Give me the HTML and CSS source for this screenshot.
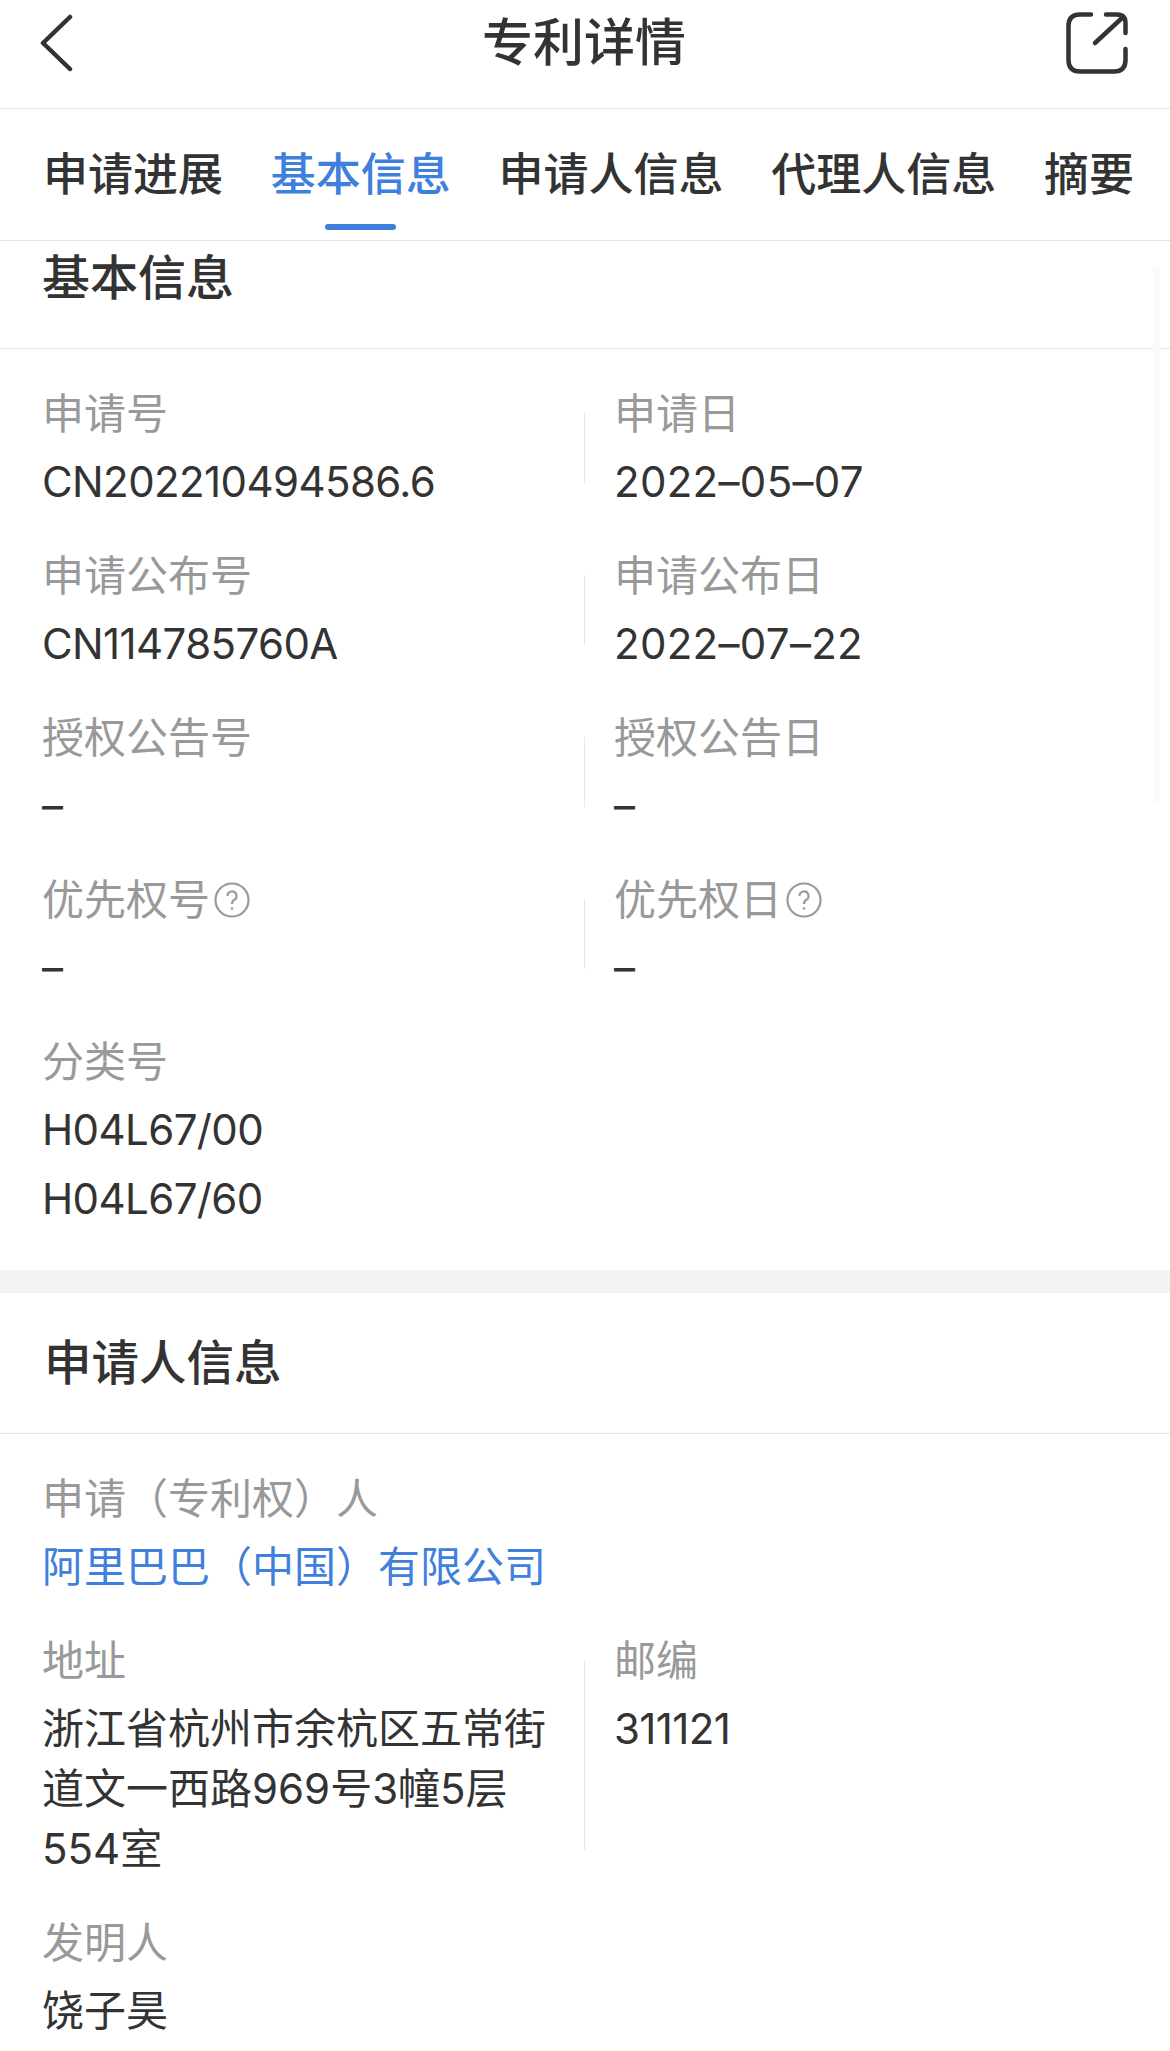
FILE: index.html
```html
<!doctype html>
<html lang="zh">
<head>
	<meta charset="utf-8" />
	<title>专利详情</title>
	<link rel="stylesheet" href="styles.css">
</head>
<body>
	<header class="navbar">
		<svg class="nav-back" width="36" height="58" viewBox="0 0 36 58"><path d="M30 3 L3 29 L30 55" /></svg>
		<h1>专利详情</h1>
		<svg class="nav-share" width="62" height="62" viewBox="0 0 62 62"><path d="M25 2.5 H14 Q2.5 2.5 2.5 14 V48 Q2.5 59.5 14 59.5 H48 Q59.5 59.5 59.5 48 V37 M40 2.5 H51 Q59.5 2.5 59.5 11 V21 M56 6 L29 31" /></svg>
	</header>

	<nav class="tabs">
		<a>申请进展</a>
		<a class="active">基本信息</a>
		<a>申请人信息</a>
		<a>代理人信息</a>
		<a>摘要</a>
	</nav>

	<main>
		<section>
			<h2 class="clipped">基本信息</h2>
			<div class="fields">
				<div class="field left"><label>申请号</label><p class="num">CN202210494586.6</p></div>
				<div class="field"><label>申请日</label><p class="date">2022–05–07</p></div>
				<div class="field left"><label>申请公布号</label><p class="num">CN114785760A</p></div>
				<div class="field"><label>申请公布日</label><p class="date">2022–07–22</p></div>
				<div class="field left"><label>授权公告号</label><p class="num">–</p></div>
				<div class="field"><label>授权公告日</label><p class="num">–</p></div>
				<div class="field left"><label>优先权号<svg class="help" width="36" height="36" viewBox="0 0 36 36"><circle cx="18" cy="18" r="16.5" /><path d="M13.5 14 A4.5 4.5 0 1 1 20 18 Q18 19 18 22" /><circle class="dot" cx="18" cy="26.5" r="1.3" /></svg></label><p class="num">–</p></div>
				<div class="field"><label>优先权日<svg class="help" width="36" height="36" viewBox="0 0 36 36"><circle cx="18" cy="18" r="16.5" /><path d="M13.5 14 A4.5 4.5 0 1 1 20 18 Q18 19 18 22" /><circle class="dot" cx="18" cy="26.5" r="1.3" /></svg></label><p class="num">–</p></div>
				<div class="field wide"><label>分类号</label><p class="num">H04L67/00</p><p class="num">H04L67/60</p></div>
			</div>
		</section>

		<section>
			<h2>申请人信息</h2>
			<div class="fields">
				<div class="field wide"><label>申请（专利权）人</label><p class="link">阿里巴巴（中国）有限公司</p></div>
				<div class="field left"><label>地址</label><p>浙江省杭州市余杭区五常街道文一西路969号3幢5层554室</p></div>
				<div class="field"><label>邮编</label><p class="num">311121</p></div>
				<div class="field wide"><label>发明人</label><p>饶子昊</p></div>
			</div>
		</section>
	</main>

	<div class="scrollbar"></div>
</body>
</html>
```

FILE: styles.css
```css
html, body {
	width: 100%;
	height: 100%;
	margin: 0;
	background: #fff;
	color: #333;
	font-family: "Inter", "Noto Sans CJK SC", sans-serif;
	overflow: hidden;
}

.navbar {
	height: 109px;
	box-sizing: border-box;
	display: grid;
	grid-template-columns: 1fr auto 1fr;
	align-items: center;
	padding: 0 42px 22px 40px;
	border-bottom: 1px solid #e3e3e3;
}

.navbar h1 {
	margin: 0;
	font-size: 51px;
	font-weight: 500;
	line-height: 60px;
	color: #333;
}

.nav-share { justify-self: end; }

.nav-back path, .nav-share path {
	fill: none;
	stroke: #333;
	stroke-width: 4.5;
	stroke-linecap: round;
	stroke-linejoin: round;
}

.tabs {
	height: 132px;
	box-sizing: border-box;
	display: flex;
	justify-content: space-between;
	padding: 38px 36px 0 43px;
	border-bottom: 1px solid #e3e3e3;
}

.tabs a {
	position: relative;
	font-size: 45px;
	font-weight: 500;
	line-height: 56px;
	color: #333;
}

.tabs a.active { color: #3f80dc; }

.tabs a.active::after {
	content: "";
	position: absolute;
	left: 50%;
	bottom: 10px;
	width: 71px;
	height: 6px;
	margin-left: -36px;
	border-radius: 3px;
	background: #3f80dc;
}

section {
	border-bottom: 23px solid #f3f3f3;
}

section:last-child { border-bottom: 0; }

h2 {
	margin: 0;
	height: 141px;
	box-sizing: border-box;
	padding: 0 44px;
	font-size: 47.5px;
	font-weight: 500;
	line-height: 140px;
	border-bottom: 1px solid #e3e3e3;
}

h2.clipped {
	height: 108px;
	padding-left: 42px;
	line-height: 74px;
	font-size: 48px;
}

.fields {
	display: grid;
	grid-template-columns: 585px 1fr;
	padding: 30px 0 36px;
	row-gap: 24px;
}

.field {
	padding-left: 29px;
}

.field.left, .field.wide { padding-left: 42px; }
.field.wide { grid-column: 1 / -1; }

.field.left {
	position: relative;
	padding-right: 30px;
}

/* divider runs from the middle of the label to the middle of the last line */
.field.left::after {
	content: "";
	position: absolute;
	right: 0;
	top: 34px;
	bottom: 34px;
	width: 1px;
	background: #e8e8e8;
}

.field label {
	display: flex;
	align-items: center;
	gap: 4px;
	font-size: 42px;
	line-height: 69px;
	color: #999;
}

.field p {
	margin: 0;
	padding: 4px 0 5px;
	font-size: 42px;
	line-height: 60px;
	color: #333;
}

.field p.num { letter-spacing: -0.6px; }
.field p.date { letter-spacing: 0.3px; }
.field p.link { color: #3f80dc; }

.help { fill: none; stroke: #999; stroke-width: 2.2; }
.help .dot { fill: #999; stroke: none; }

/* faint scroll indicator over the content */
.scrollbar {
	position: absolute;
	top: 267px;
	right: 10px;
	width: 7px;
	height: 536px;
	background: #fafafa;
}
```
